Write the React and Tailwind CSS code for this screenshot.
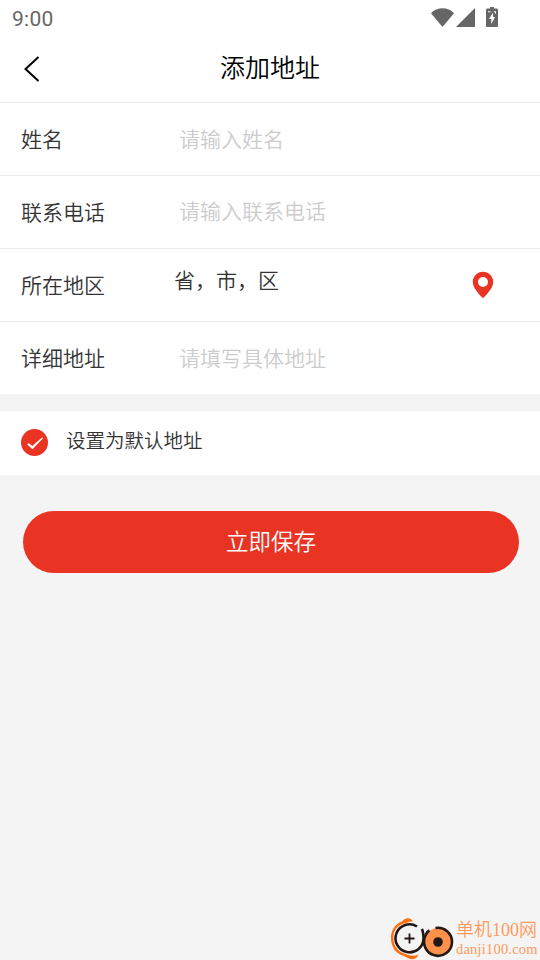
import React, { useState } from 'react';

function StatusBar() {
  return (
    <div className="flex h-[35px] items-start justify-between pl-3 pr-[42px] text-[#666]">
      <span className="pt-[6px] font-['Roboto',sans-serif] text-[21px] leading-[26px] font-[450] tracking-[0.3px]">9:00</span>
      <div className="flex items-start pt-[7px]">
        <svg className="h-5 w-6" viewBox="0 0 24 20" fill="currentColor">
          <path d="M11.500 20L0 6.300A15.500 15.500 0 0 1 23 6.300z" />
        </svg>
        <svg className="mr-px ml-[1px] h-5 w-5" viewBox="0 0 20 20" fill="currentColor">
          <path d="M0 20L19 1v19H0z" />
        </svg>
        <svg className="ml-[9px] h-5 w-3" viewBox="0 0 12 20" fill="currentColor">
          <path fillRule="evenodd" d="M4 0h4v1.500h2.700c.7 0 1.300.6 1.300 1.300v15.900c0 .7-.6 1.300-1.300 1.300H1.300C.6 20 0 19.400 0 18.700V2.800c0-.7.6-1.300 1.300-1.300H4V0zM7 5.500L3 12h2.300v5L9 10H7V5.500zM2 4.200v1h2.500v-1H2zm6 0v1h1v1.300h1V4.200H8z" />
        </svg>
      </div>
    </div>
  );
}

function Header() {
  return (
    <header className="grid h-[68px] grid-cols-[80px_1fr_80px] items-center border-b border-[#ebebeb]">
      <button type="button" aria-label="返回" className="pl-6">
        <svg className="h-7 w-4" viewBox="0 0 16 28" fill="none" stroke="#000" strokeWidth="2">
          <path d="M14.500 2L1.500 14l13 12" />
        </svg>
      </button>
      <h1 className="pb-[5px] text-center text-[25px] leading-[36px] font-[350] text-black">添加地址</h1>
    </header>
  );
}

function Field({ label, last, children }) {
  return (
    <div className={`flex items-center pl-[21px] ${last ? 'h-[72px]' : 'h-[73px] border-b border-[#ebebeb]'}`}>
      <label className="mb-[2px] w-[153px] shrink-0 text-[21px] leading-[30px] text-[#333]">{label}</label>
      {children}
    </div>
  );
}

const inputClass =
  'ml-[5px] min-w-0 flex-1 bg-transparent text-[21px] leading-[30px] font-[350] text-[#333] placeholder-[#ccc] outline-none';

function Watermark() {
  return (
    <div className="mt-auto flex h-[44px] items-start pl-[390px]">
      <svg className="h-[44px] w-[65px] shrink-0" viewBox="0 0 65 44" fill="none">
        <path d="M23 5.500C20 1 16 1.500 12 5.500C5 8 1 14 1 22C1 31 6 38 14 40C20 44 26 45 28.500 38.500C24 41 18 39 14 37.500C7 35 3.300 29 3.300 22C3.300 14 8 9 14 7.500C17 6.500 20 5 23 5.500z" fill="#ff6d0c" />
        <path d="M27 10.500A14 14 0 1 0 33.500 22.500C33.500 19 33.500 16 31.800 13" stroke="#231815" strokeWidth="2.600" />
        <circle cx="48" cy="25.500" r="13.500" fill="#ff914d" />
        <path d="M45.500 12A14 14 0 1 1 35.500 19.500Q37 15.500 39.500 14.500" stroke="#231815" strokeWidth="2.600" />
        <circle cx="48" cy="26" r="4.800" fill="#231815" />
        <path d="M19.500 17.500v10M14.500 22.500h10" stroke="#231815" strokeWidth="1.800" />
      </svg>
      <div className="pt-[4px] pl-px font-['Liberation_Serif','Noto_Sans_CJK_SC',serif] whitespace-nowrap text-[#ff9a5c]">
        <div className="text-[18px] leading-[21px]">单机100网</div>
        <div className="text-[14.500px] leading-[16px] tracking-[0.2px]">danji100.com</div>
      </div>
    </div>
  );
}

export default function App() {
  const [isDefault, setIsDefault] = useState(true);

  return (
    <div className="flex h-screen flex-col overflow-hidden bg-[#f4f4f4] font-['Noto_Sans_CJK_SC',sans-serif] font-[350]">
      <div className="bg-white">
        <StatusBar />
        <Header />
        <Field label="姓名">
          <input className={`${inputClass} mb-[2px]`} placeholder="请输入姓名" />
        </Field>
        <Field label="联系电话">
          <input className={`${inputClass} mb-[4px]`} placeholder="请输入联系电话" />
        </Field>
        <Field label="所在地区">
          <span className="flex-1 pb-[12px] text-[21px] leading-[30px] text-[#333]">省，市，区</span>
          <svg className="mr-[46px] h-[28px] w-[22px]" viewBox="0 0 22 28">
            <path fillRule="evenodd" fill="#e93323" d="M11 .7C5.300.7.800 5.200.800 10.800c0 5.700 4.700 11 10.200 16.500 5.500-5.500 10.200-10.800 10.200-16.500C21.200 5.200 16.700.7 11 .7zm0 5.300a5 5 0 1 1 0 10 5 5 0 0 1 0-10z" />
          </svg>
        </Field>
        <Field label="详细地址" last>
          <input className={`${inputClass} mb-[2px]`} placeholder="请填写具体地址" />
        </Field>
      </div>

      {/* Default address toggle */}
      <div className="mt-[17px] flex h-[64px] shrink-0 items-center bg-white pl-[21px]">
        <button type="button" aria-label="设置为默认地址" className="mb-px" onClick={() => setIsDefault(!isDefault)}>
          <svg className="block h-[27px] w-[27px]" viewBox="0 0 27 27">
            <circle cx="13.500" cy="13.500" r="13.500" fill={isDefault ? '#e93323' : '#ccc'} />
            <path d="M6 15.200l2-1 3.300 2.900L21.300 8.300l.7.900L11.500 20.200z" fill="#fff" />
          </svg>
        </button>
        <span className="ml-[18px] pb-[6px] text-[19.500px] leading-[28px] text-[#333]">设置为默认地址</span>
      </div>

      <button type="button" className="mt-9 mr-[21px] ml-[23px] h-[62px] shrink-0 rounded-full bg-[#e93323] pb-[2px] text-[22.500px] text-white">
        立即保存
      </button>

      <Watermark />
    </div>
  );
}
